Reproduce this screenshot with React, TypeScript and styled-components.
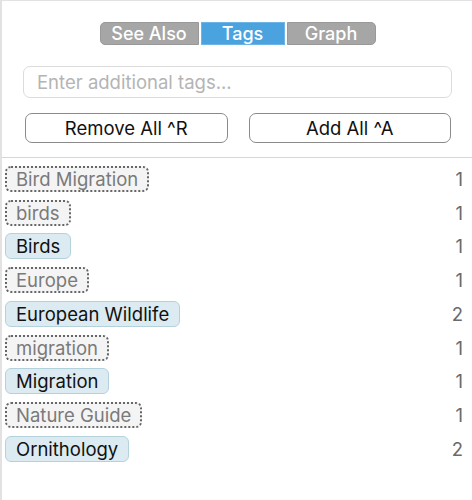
import React from "react";
import styled, { createGlobalStyle } from "styled-components";

const Global = createGlobalStyle`
  html, body { margin: 0; padding: 0; background: #fff; }
  body { font-family: Inter, "Liberation Sans", sans-serif; }
  * { box-sizing: border-box; }
`;

const Panel = styled.div`
  width: 472px;
  height: 500px;
  border-left: 2px solid #e2e2e2;
  border-top: 1px solid #e2e2e2;
  display: flex;
  flex-direction: column;
  overflow: hidden;
`;

const Header = styled.div`
  display: flex;
  flex-direction: column;
  align-items: center;
  padding: 21px 20px 0 21px;
`;

const Segmented = styled.div`
  display: flex;
  gap: 2px;
  height: 23px;
`;

const Segment = styled.div<{ $active?: boolean; $pos: "first" | "mid" | "last"; $w: number }>`
  width: ${(p) => p.$w}px;
  display: flex;
  align-items: center;
  justify-content: center;
  color: #fff;
  font-size: 18px;
  font-weight: 500;
  background: ${(p) => (p.$active ? "#4aa3df" : "#a6a6a6")};
  border: 1px solid ${(p) => (p.$active ? "#6db5e6" : "#999")};
  border-radius: ${(p) =>
    p.$pos === "first" ? "5px 0 0 5px" : p.$pos === "last" ? "0 5px 5px 0" : "0"};
`;

const Input = styled.input`
  margin-top: 21px;
  width: 100%;
  height: 32px;
  border: 1px solid #dcdcdc;
  border-radius: 7px;
  padding: 0 13px;
  font-family: inherit;
  font-size: 18.5px;
  color: #222;
  outline: none;
  &::placeholder { color: #b4b4b4; }
`;

const ButtonRow = styled.div`
  margin-top: 15px;
  width: 100%;
  display: grid;
  grid-template-columns: 1fr 1fr;
  gap: 21px;
  padding: 0 1px 0 2px;
`;

const Button = styled.button`
  height: 30px;
  border: 1px solid #8a8a8a;
  border-radius: 7px;
  background: #fff;
  font-family: inherit;
  font-size: 18.5px;
  color: #111;
  padding: 0;
`;

const Separator = styled.div`
  margin-top: 14px;
  height: 1px;
  background: #d6d6d6;
`;

const List = styled.div`
  display: flex;
  flex-direction: column;
  padding: 4px 9px 0 3px;
`;

const Row = styled.div`
  height: 33.75px;
  display: flex;
  align-items: center;
  justify-content: space-between;
`;

const Chip = styled.span<{ $known: boolean }>`
  height: 26px;
  display: inline-flex;
  align-items: center;
  padding: 0 ${(p) => (p.$known ? "10px" : "9px")};
  border-radius: 6px;
  font-size: 18.5px;
  background: ${(p) => (p.$known ? "#dcebf1" : "#f4f4f4")};
  border: ${(p) => (p.$known ? "1px solid #b3d2dc" : "2px dotted #666")};
  color: ${(p) => (p.$known ? "#111" : "#7a7a7a")};
`;

const Count = styled.span`
  font-size: 18.5px;
  color: #6a6a6a;
`;

const tags: { name: string; known: boolean; count: number }[] = [
  { name: "Bird Migration", known: false, count: 1 },
  { name: "birds", known: false, count: 1 },
  { name: "Birds", known: true, count: 1 },
  { name: "Europe", known: false, count: 1 },
  { name: "European Wildlife", known: true, count: 2 },
  { name: "migration", known: false, count: 1 },
  { name: "Migration", known: true, count: 1 },
  { name: "Nature Guide", known: false, count: 1 },
  { name: "Ornithology", known: true, count: 2 },
];

export default function App() {
  return (
    <>
      <Global />
      <Panel>
        <Header>
          <Segmented>
            <Segment $pos="first" $w={99}>See Also</Segment>
            <Segment $pos="mid" $w={84} $active>Tags</Segment>
            <Segment $pos="last" $w={89}>Graph</Segment>
          </Segmented>
          <Input placeholder="Enter additional tags..." />
          <ButtonRow>
            <Button>Remove All ^R</Button>
            <Button>Add All ^A</Button>
          </ButtonRow>
        </Header>
        <Separator />
        <List>
          {tags.map((t) => (
            <Row key={t.name}>
              <Chip $known={t.known}>{t.name}</Chip>
              <Count>{t.count}</Count>
            </Row>
          ))}
        </List>
      </Panel>
    </>
  );
}
